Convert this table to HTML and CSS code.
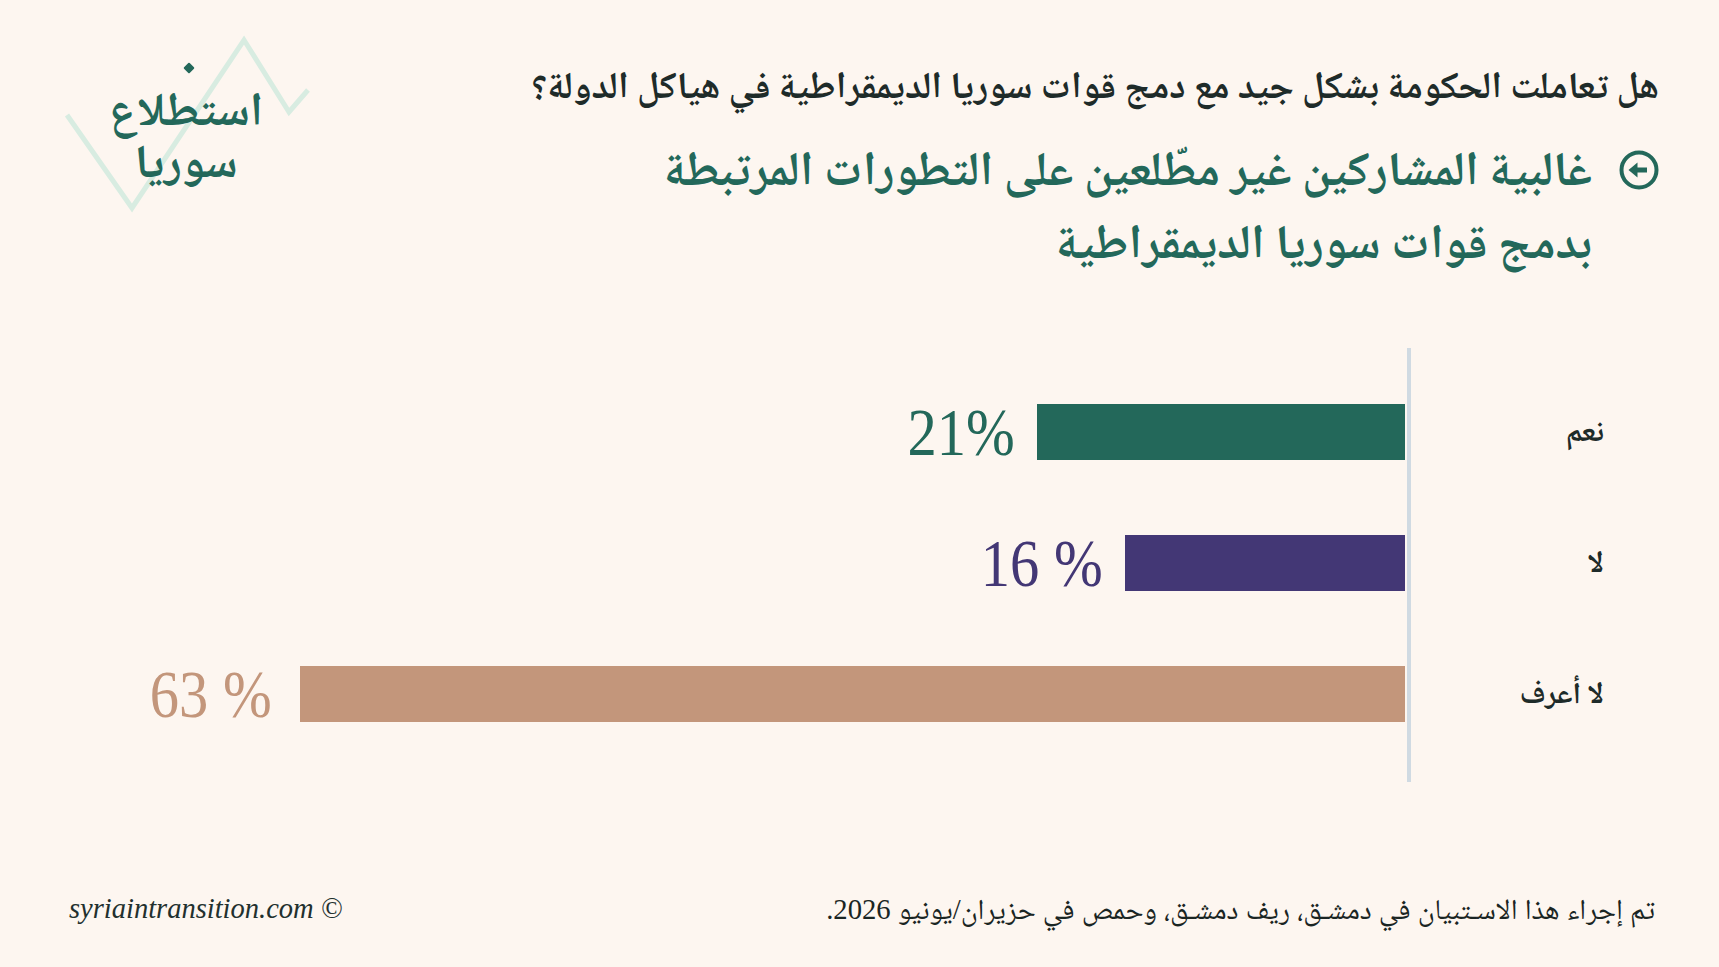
FILE: index.html
```html
<!DOCTYPE html>
<html lang="ar" dir="rtl">
<head>
<meta charset="utf-8">
<title>استطلاع سوريا</title>
<link rel="stylesheet" href="styles.css">
</head>
<body>
<div class="page">
  <header class="top">
    <div class="titles">
      <h2 class="question">هل تعاملت الحكومة بشكل جيد مع دمج قوات سوريا الديمقراطية في هياكل الدولة؟</h2>
      <div class="headline">
        <svg class="headline-icon" width="40" height="40" viewBox="0 0 40 40" aria-hidden="true">
          <circle cx="20" cy="20" r="17.5" fill="none" stroke="#23685a" stroke-width="4"/>
          <path d="M9.5 20 L18.5 12.5 L18.5 27.5 Z" fill="#23685a"/>
          <rect x="17" y="17.5" width="11" height="5" fill="#23685a"/>
        </svg>
        <h1 class="headline-text">غالبية المشاركين غير مطّلعين على التطورات المرتبطة<br>بدمج قوات سوريا الديمقراطية</h1>
      </div>
    </div>
    <div class="logo">
      <svg class="logo-zigzag" width="250" height="180" viewBox="0 0 250 180" aria-hidden="true">
        <polyline points="7,80 72,173 184,5 229,77 248,55" fill="none" stroke="#d8ece1" stroke-width="5"/>
      </svg>
      <span class="logo-dot"></span>
      <div class="logo-text">استطلاع<br>سوريا</div>
    </div>
  </header>

  <section class="chart">
    <div class="labels">
      <div class="label">نعم</div>
      <div class="label">لا</div>
      <div class="label">لا أعرف</div>
    </div>
    <div class="bars">
      <div class="row">
        <div class="bar bar-green" style="width:368px"></div>
        <div class="pct pct-green">21%</div>
      </div>
      <div class="row">
        <div class="bar bar-purple" style="width:280px"></div>
        <div class="pct pct-purple">16 %</div>
      </div>
      <div class="row">
        <div class="bar bar-tan" style="width:1105px"></div>
        <div class="pct pct-tan">63 %</div>
      </div>
    </div>
  </section>

  <footer class="foot">
    <p class="note">تم إجراء هذا الاسـتبيان في دمشـق، ريف دمشـق، وحمص في حزيران/يونيو 2026.</p>
    <p class="site">syriaintransition.com ©</p>
  </footer>
</div>
</body>
</html>
```

FILE: styles.css
```css
* { box-sizing: border-box; }

html, body {
  margin: 0;
  padding: 0;
  background: #fdf6f0;
}

body {
  font-family: "Noto Naskh Arabic", "Noto Sans Arabic", "DejaVu Sans", sans-serif;
  color: #1e2b29;
}

.page {
  width: 1719px;
  height: 967px;
  display: flex;
  flex-direction: column;
  overflow: hidden;
}

/* ---------- header ---------- */
.top {
  display: flex;
  justify-content: space-between;
  align-items: flex-start;
  padding: 35px 60px 0 60px;
}

.titles {
  padding-top: 30px;
  display: flex;
  flex-direction: column;
}

.question {
  margin: 0;
  font-size: 37.5px;
  line-height: 50px;
  font-weight: 700;
  color: #1e2b29;
}

.headline {
  display: flex;
  align-items: flex-start;
  gap: 27px;
  margin-top: 23px;
}

.headline-icon {
  flex: none;
  margin-top: 12px;
}

.headline-text {
  margin: 0;
  font-size: 48px;
  line-height: 73px;
  font-weight: 700;
  color: #23685a;
}

/* ---------- logo ---------- */
.logo {
  position: relative;
  width: 250px;
  height: 180px;
  flex: none;
}

.logo-zigzag {
  position: absolute;
  left: 0;
  top: 0;
}

.logo-dot {
  position: absolute;
  left: 125px;
  top: 29px;
  width: 8px;
  height: 8px;
  background: #23685a;
  transform: rotate(45deg);
  border-radius: 1px;
}

.logo-text {
  position: relative;
  width: 160px;
  margin-right: 44px;
  padding-top: 54px;
  text-align: center;
  font-size: 47px;
  line-height: 52px;
  font-weight: 700;
  color: #23685a;
}

/* ---------- chart ---------- */
.chart {
  display: flex;
  align-items: stretch;
  margin-top: 64px;
  padding-right: 115px;
}

.labels {
  width: 193px;
  flex: none;
  display: flex;
  flex-direction: column;
  gap: 75px;
  padding-top: 59px;
}

.label {
  height: 56px;
  line-height: 56px;
  font-size: 30px;
  font-weight: 700;
  color: #1e2b29;
}

.bars {
  flex: 1;
  display: flex;
  flex-direction: column;
  gap: 75px;
  padding: 56px 2px 60px 0;
  border-right: 4px solid #d0dae2;
}

.row {
  display: flex;
  align-items: center;
  height: 56px;
}

.bar {
  height: 56px;
  flex: none;
}

.bar-green { background: #23685a; }
.bar-purple { background: #433775; }
.bar-tan { background: #c3967b; }

.pct {
  margin-right: 22px;
  direction: ltr;
  unicode-bidi: isolate;
  font-family: "Liberation Serif", serif;
  font-size: 68px;
  line-height: 68px;
  transform: scaleX(0.86);
  transform-origin: right center;
  white-space: nowrap;
}

.pct-green { color: #23685a; }
.pct-purple { color: #433775; }
.pct-tan { color: #c3967b; margin-right: 28px; }

/* ---------- footer ---------- */
.foot {
  margin-top: auto;
  margin-bottom: 38px;
  display: flex;
  justify-content: space-between;
  align-items: center;
  padding: 0 64px 0 69px;
}

.note {
  margin: 0;
  font-family: "Liberation Serif", "Noto Naskh Arabic", "Noto Sans Arabic", "DejaVu Sans", serif;
  font-size: 28.7px;
  line-height: 40px;
  color: #1a2523;
}

.site {
  margin: 0;
  direction: ltr;
  unicode-bidi: isolate;
  font-family: "Liberation Serif", serif;
  font-style: italic;
  font-size: 28.5px;
  line-height: 40px;
  color: #22302e;
}
```
